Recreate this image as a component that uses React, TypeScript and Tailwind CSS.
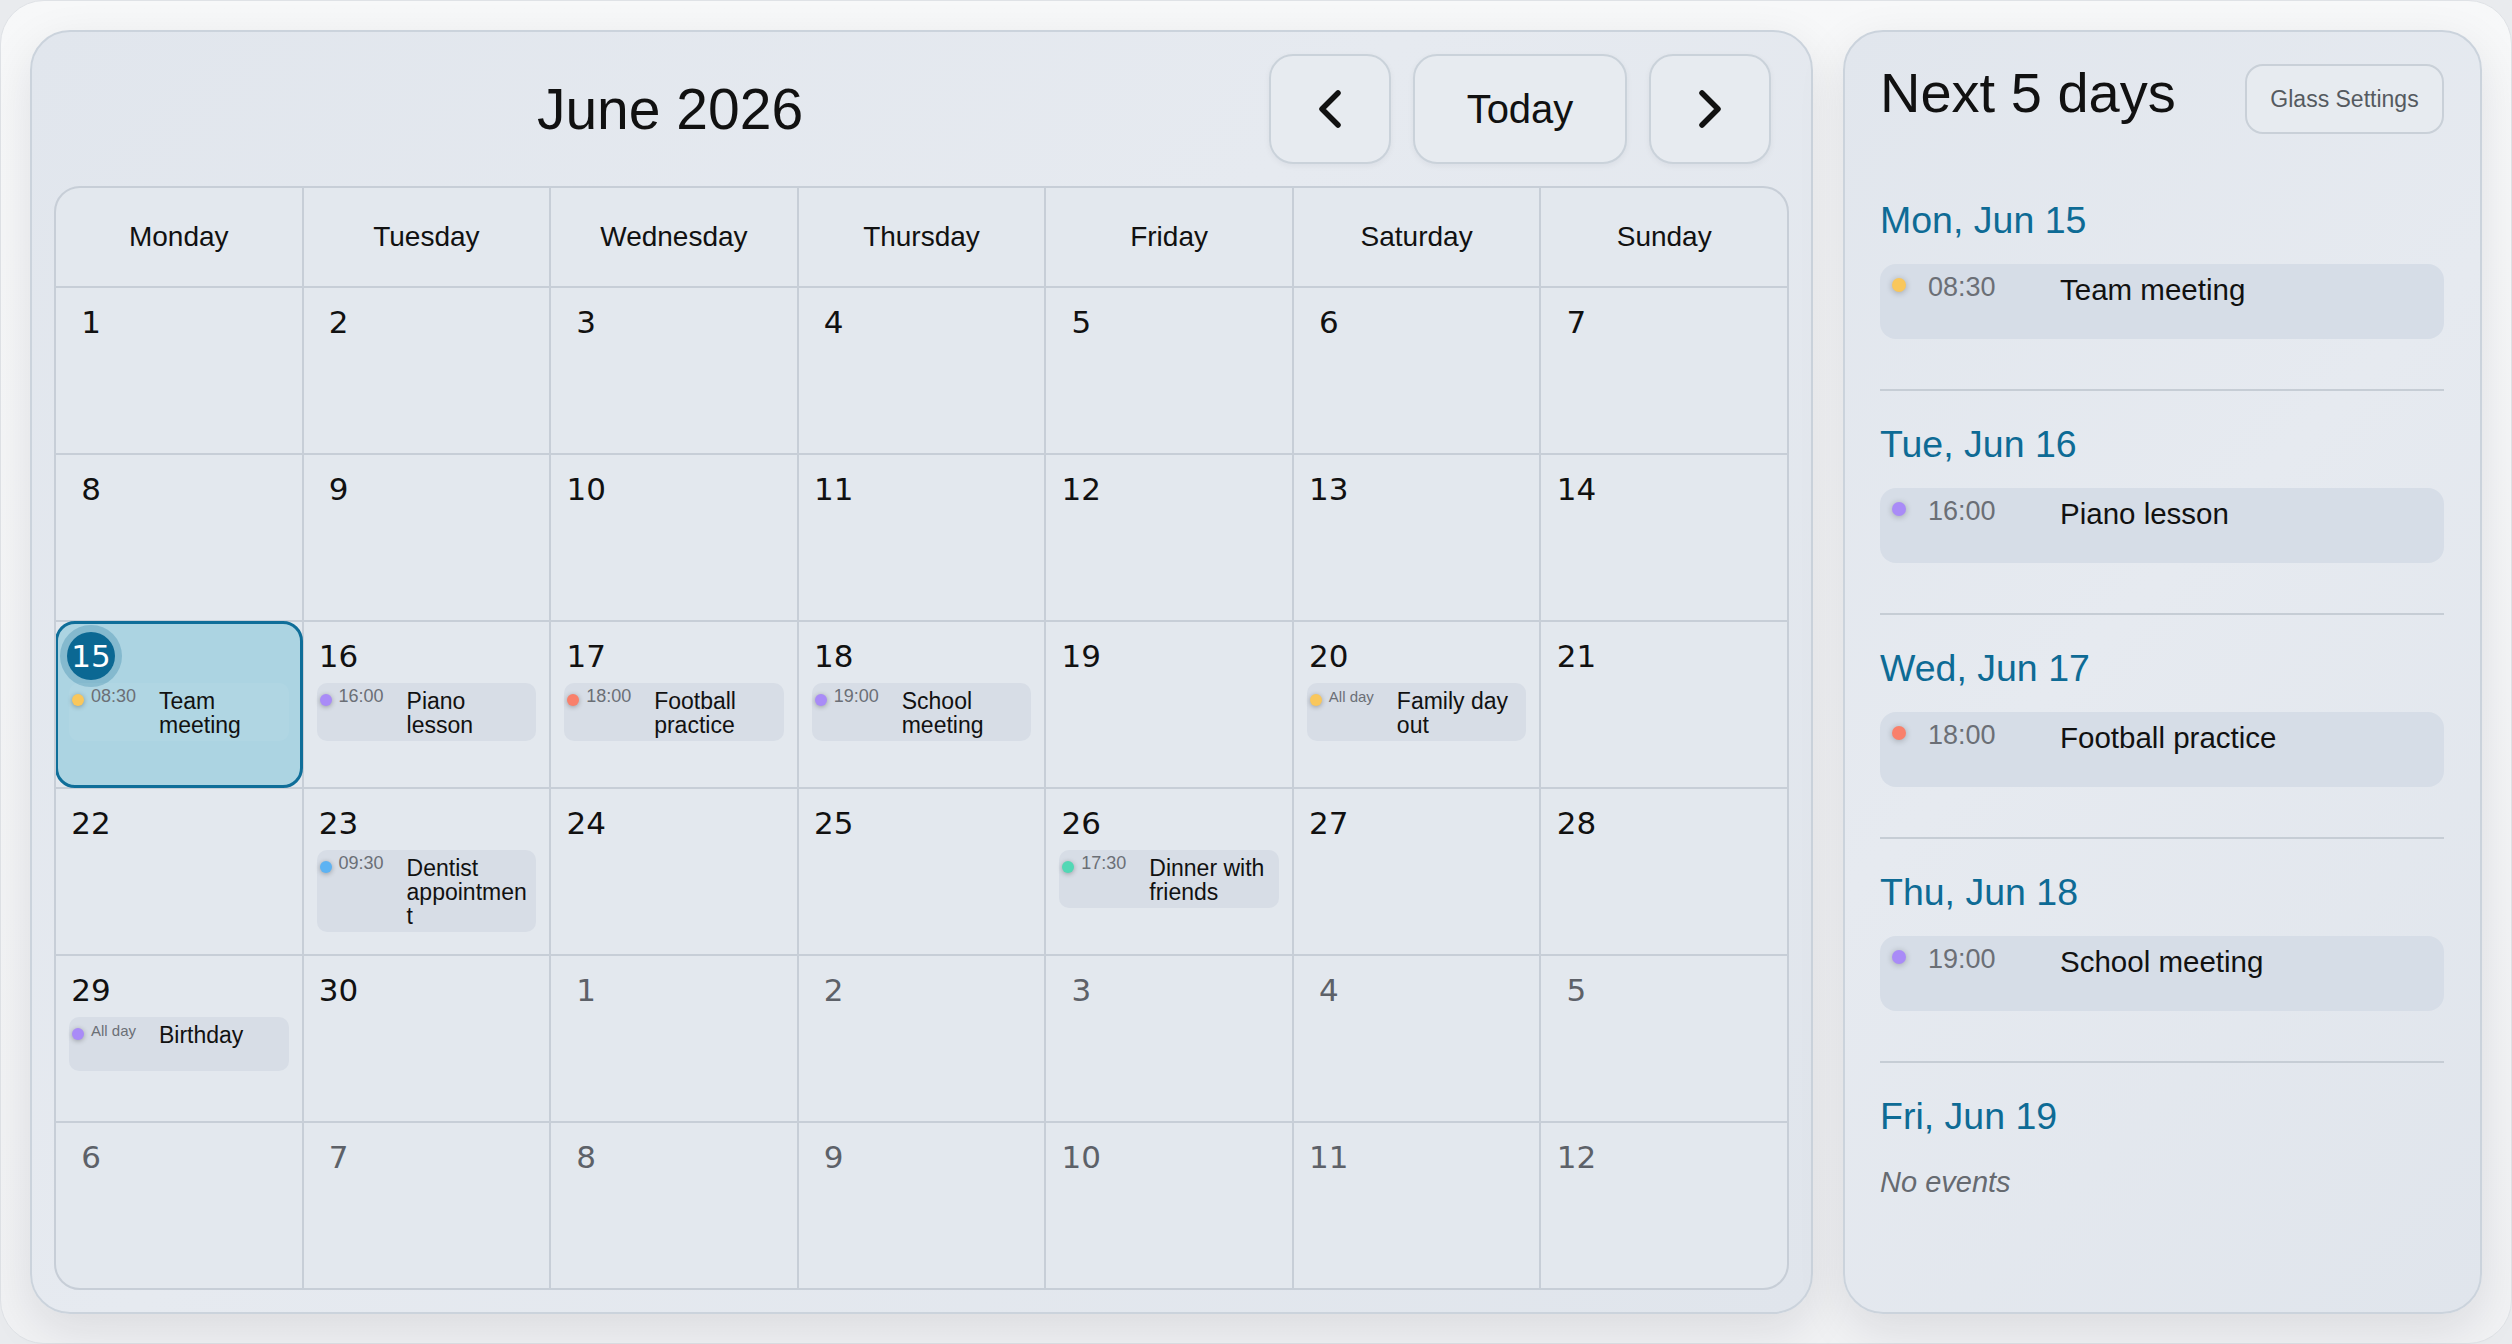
import React from "react";

type Ev = { time: string; title: string; color: string };

const C = {
  yellow: "bg-[#f9c75c]",
  purple: "bg-[#a98bf7]",
  coral: "bg-[#f9806b]",
  blue: "bg-[#5db3f3]",
  teal: "bg-[#52d8b5]",
};

const events: Record<number, Ev> = {
  15: { time: "08:30", title: "Team meeting", color: C.yellow },
  16: { time: "16:00", title: "Piano lesson", color: C.purple },
  17: { time: "18:00", title: "Football practice", color: C.coral },
  18: { time: "19:00", title: "School meeting", color: C.purple },
  20: { time: "All day", title: "Family day out", color: C.yellow },
  23: { time: "09:30", title: "Dentist appointment", color: C.blue },
  26: { time: "17:30", title: "Dinner with friends", color: C.teal },
  29: { time: "All day", title: "Birthday", color: C.purple },
};

type Day = { d: number; cur: boolean };

const weeks: Day[][] = (() => {
  const all: Day[] = [];
  for (let i = 1; i <= 30; i++) all.push({ d: i, cur: true });
  for (let i = 1; i <= 12; i++) all.push({ d: i, cur: false });
  const out: Day[][] = [];
  for (let w = 0; w < 6; w++) out.push(all.slice(w * 7, w * 7 + 7));
  return out;
})();

const weekdays = ["Monday", "Tuesday", "Wednesday", "Thursday", "Friday", "Saturday", "Sunday"];

const upcoming: { label: string; ev?: Ev }[] = [
  { label: "Mon, Jun 15", ev: events[15] },
  { label: "Tue, Jun 16", ev: events[16] },
  { label: "Wed, Jun 17", ev: events[17] },
  { label: "Thu, Jun 18", ev: events[18] },
  { label: "Fri, Jun 19" },
];

function Chevron({ dir }: { dir: "left" | "right" }) {
  return (
    <svg width="28" height="42" viewBox="0 0 28 42" fill="none">
      <path
        d={dir === "left" ? "M22 5 L6 21 L22 37" : "M6 5 L22 21 L6 37"}
        stroke="#111111"
        strokeWidth="5.5"
        strokeLinecap="round"
        strokeLinejoin="round"
      />
    </svg>
  );
}

function Chip({ ev, today }: { ev: Ev; today: boolean }) {
  const allDay = ev.time === "All day";
  return (
    <div
      className={`relative mt-[3px] flex min-h-[54px] items-start rounded-[10px] pb-[4px] pl-[3px] pr-[6px] pt-[4px] ${
        today ? "bg-white/5" : "bg-[#d7dde6]"
      }`}
    >
      <span className={`mt-[7px] h-[12px] w-[12px] shrink-0 rounded-full ${ev.color} shadow-[0_1px_5px_rgba(0,0,0,0.3)]`} />
      <span
        className={`ml-[7px] w-[68px] shrink-0 leading-[18px] text-[#6b6f76] ${
          allDay ? "pt-[1px] text-[15px]" : "text-[18px]"
        }`}
      >
        {ev.time}
      </span>
      <span className="min-w-0 flex-1 break-words pt-[2px] text-[23px] leading-[24px] text-[#111111]">{ev.title}</span>
    </div>
  );
}

function Cell({ day }: { day: Day }) {
  const ev = day.cur ? events[day.d] : undefined;
  const today = day.cur && day.d === 15;
  return (
    <div className="relative bg-[#e3e8ee] px-[13px] pt-[10px]">
      {today && (
        <div className="absolute -inset-[1px] rounded-[20px] border-[3px] border-[#0f6e99] bg-[#acd4e2]" />
      )}
      <div
        className={`relative -ml-[2px] flex h-[48px] w-[48px] items-center justify-center rounded-full font-['DejaVu_Sans',sans-serif] text-[31px] leading-none ${
          today
            ? "bg-[#0b6893] text-white ring-[7px] ring-[#0b6893]/25"
            : day.cur
            ? "text-[#111111]"
            : "text-[#5d6168]"
        }`}
      >
        {day.d}
      </div>
      {ev && <Chip ev={ev} today={today} />}
    </div>
  );
}

export default function App() {
  return (
    <div className="h-[1344px] w-[2512px] bg-[#e9ebee] font-['Liberation_Sans',Arial,sans-serif] text-[#111111]">
      <div className="flex h-full gap-[30px] rounded-[44px] border border-[#dfe2e6] bg-[linear-gradient(180deg,#f7f8f9,#f1f2f4)] p-[29px]">
        {/* Calendar panel */}
        <section className="flex min-w-0 flex-1 flex-col rounded-[40px] border-2 border-[#cbd3dc] bg-[linear-gradient(135deg,#e1e6ed,#e6eaf0_45%,#e0e5ec)] p-[22px] shadow-[0_16px_48px_rgba(15,23,42,0.10)]">
          <header className="mb-[22px] flex h-[110px] shrink-0 items-center gap-[22px] pr-[18px]">
            <h1 className="flex-1 pl-[39px] text-center text-[57px] leading-[66px]">June 2026</h1>
            <button className="flex h-[110px] w-[122px] items-center justify-center rounded-[24px] border-2 border-[#cad2da] bg-[#e7ebf0] shadow-[0_2px_6px_rgba(15,23,42,0.05)]">
              <Chevron dir="left" />
            </button>
            <button className="flex h-[110px] w-[214px] items-center justify-center rounded-[24px] border-2 border-[#cad2da] bg-[#e7ebf0] text-[40px] shadow-[0_2px_6px_rgba(15,23,42,0.05)]">
              Today
            </button>
            <button className="flex h-[110px] w-[122px] items-center justify-center rounded-[24px] border-2 border-[#cad2da] bg-[#e7ebf0] shadow-[0_2px_6px_rgba(15,23,42,0.05)]">
              <Chevron dir="right" />
            </button>
          </header>
          <div className="min-h-0 flex-1 overflow-hidden rounded-[26px] border-2 border-[#c7ced7] bg-[#c7ced7]">
            <div className="grid h-full grid-cols-7 grid-rows-[98px_repeat(6,1fr)] gap-[2px]">
              {weekdays.map((w) => (
                <div key={w} className="flex items-center justify-center bg-[#e3e8ee] text-[28px]">
                  {w}
                </div>
              ))}
              {weeks.flat().map((day, i) => (
                <Cell key={i} day={day} />
              ))}
            </div>
          </div>
        </section>

        {/* Upcoming panel */}
        <aside className="flex w-[639px] shrink-0 flex-col rounded-[40px] border-2 border-[#cbd3dc] bg-[linear-gradient(135deg,#e1e6ed,#e6eaf0_45%,#e0e5ec)] pl-[35px] pr-[36px] pt-[27px] shadow-[0_16px_48px_rgba(15,23,42,0.10)]">
          <div className="flex items-start justify-between">
            <h2 className="text-[56px] leading-[68px]">Next 5 days</h2>
            <button className="mt-[5px] h-[70px] w-[199px] rounded-[18px] border-2 border-[#c9d0d8] bg-[#e7ebf0] text-[23px] text-[#555a60]">
              Glass Settings
            </button>
          </div>
          <div className="mt-[33px]">
            {upcoming.map((u, i) => (
              <div
                key={u.label}
                className={`pt-[31px] ${i < upcoming.length - 1 ? "border-b-2 border-[#c6cdd5] pb-[50px]" : ""}`}
              >
                <div className="text-[37.5px] leading-[44px] text-[#0e6b95]">{u.label}</div>
                {u.ev ? (
                  <div className="mt-[22px] flex h-[75px] items-start rounded-[16px] bg-[#d6dde7] pl-[12px] pt-[8px]">
                    <span className={`mt-[6px] h-[14px] w-[14px] shrink-0 rounded-full ${u.ev.color} shadow-[0_1px_6px_rgba(0,0,0,0.25)]`} />
                    <span className="ml-[22px] w-[132px] shrink-0 text-[27px] leading-[30px] text-[#6b6f76]">{u.ev.time}</span>
                    <span className="mt-[1px] text-[29.5px] leading-[34px]">{u.ev.title}</span>
                  </div>
                ) : (
                  <div className="mt-[27px] text-[29px] italic leading-[35px] text-[#666a70]">No events</div>
                )}
              </div>
            ))}
          </div>
        </aside>
      </div>
    </div>
  );
}
